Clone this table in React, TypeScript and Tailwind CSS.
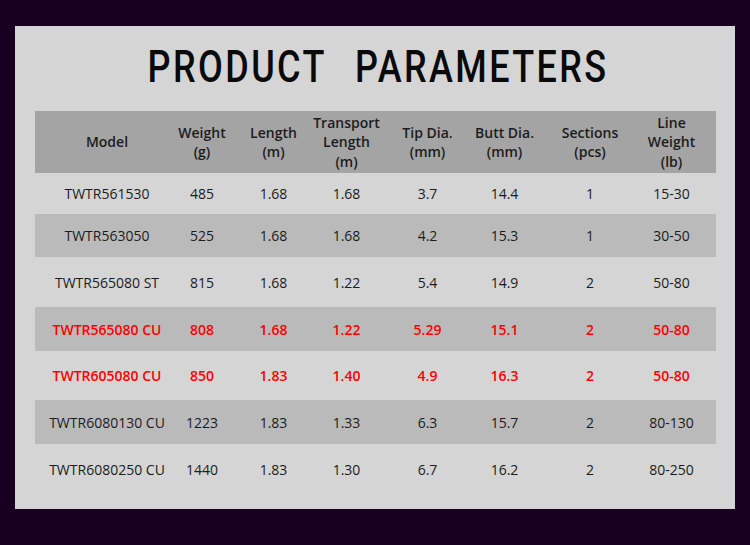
import React from "react";

type Row = {
  cells: string[];
  h: string;
  dark?: boolean;
  red?: boolean;
};

const headers = [
  ["Model"],
  ["Weight", "(g)"],
  ["Length", "(m)"],
  ["Transport", "Length", "(m)"],
  ["Tip Dia.", "(mm)"],
  ["Butt Dia.", "(mm)"],
  ["Sections", "(pcs)"],
  ["Line", "Weight", "(lb)"],
];

const rows: Row[] = [
  { cells: ["TWTR561530", "485", "1.68", "1.68", "3.7", "14.4", "1", "15-30"], h: "h-[41px]" },
  { cells: ["TWTR563050", "525", "1.68", "1.68", "4.2", "15.3", "1", "30-50"], h: "h-[43px]", dark: true },
  { cells: ["TWTR565080 ST", "815", "1.68", "1.22", "5.4", "14.9", "2", "50-80"], h: "h-[50px]" },
  { cells: ["TWTR565080 CU", "808", "1.68", "1.22", "5.29", "15.1", "2", "50-80"], h: "h-[44px]", dark: true, red: true },
  { cells: ["TWTR605080 CU", "850", "1.83", "1.40", "4.9", "16.3", "2", "50-80"], h: "h-[49px]", red: true },
  { cells: ["TWTR6080130 CU", "1223", "1.83", "1.33", "6.3", "15.7", "2", "80-130"], h: "h-[44px]", dark: true },
  { cells: ["TWTR6080250 CU", "1440", "1.83", "1.30", "6.7", "16.2", "2", "80-250"], h: "h-[50px]" },
];

// nudges so the text centres line up with the picture
const cellPad = ["pl-[24px]", "pl-[12px]", "", "pr-[4px]", "pl-[2px]", "pr-[4px]", "pl-[2px]", "pr-[4px]"];

const grid = "grid grid-cols-[120px_82px_73px_77px_79px_81px_84px_85px]";

export default function App() {
  return (
    <div className="w-[750px] h-[545px] bg-[#170020] pt-[26px] px-[15px]">
      <div className="h-[483px] bg-[#d5d5d5] pl-[20px] pr-[19px]">
        <div className="h-[85px] flex items-center justify-center pb-[4px] pl-[6px]">
          <h1 className="font-['Roboto',sans-serif] font-medium text-[45px] leading-none tracking-[3px] [word-spacing:22px] text-[#0a0a0a] scale-x-[0.8] whitespace-nowrap">
            PRODUCT PARAMETERS
          </h1>
        </div>

        <div className="font-['Open_Sans','Noto_Sans',sans-serif] text-[14px]">
          <div className={`${grid} h-[62px] bg-[#a4a4a4] text-[#1c1c1c] font-semibold leading-[19.5px]`}>
            {headers.map((lines, i) => (
              <div key={i} className={`flex flex-col items-center justify-center ${cellPad[i]}`}>
                {lines.map((l) => (
                  <span key={l} className="whitespace-nowrap">{l}</span>
                ))}
              </div>
            ))}
          </div>

          {rows.map((r, ri) => (
            <div
              key={ri}
              className={`${grid} ${r.h} ${r.dark ? "bg-[#bababa]" : ""} ${
                r.red ? "text-[#ff0000] font-semibold" : "text-[#1c1c1c]"
              }`}
            >
              {r.cells.map((c, ci) => (
                <div key={ci} className={`flex items-center justify-center whitespace-nowrap ${cellPad[ci]}`}>
                  {c}
                </div>
              ))}
            </div>
          ))}
        </div>
      </div>
    </div>
  );
}
